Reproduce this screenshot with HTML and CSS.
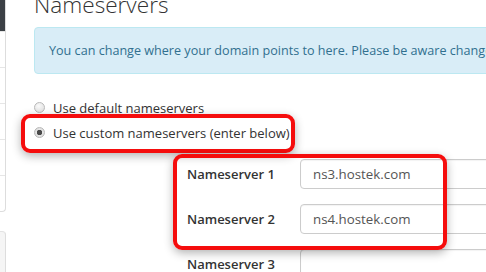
FILE: index.html
```html
<!DOCTYPE html>
<html lang="en">
<head>
    <meta charset="UTF-8">
    <title>Nameservers</title>
    <link rel="stylesheet" href="styles.css">
</head>
<body>
    <div class="page">
        <aside class="sidebar">
            <div class="panel">
                <div class="panel-heading"></div>
                <div class="panel-item"></div>
                <div class="panel-item"></div>
                <div class="panel-item"></div>
                <div class="panel-item"></div>
                <div class="panel-item"></div>
            </div>
            <div class="panel panel-alt"></div>
        </aside>

        <main class="content">
            <h1 class="title">Nameservers</h1>

            <div class="alert">
                You can change where your domain points to here. Please be aware changes can take up to 24 hours to propagate.
            </div>

            <div class="radios">
                <label class="radio">
                    <input type="radio" name="nschoice">
                    <span>Use default nameservers</span>
                </label>
                <label class="radio highlight-radio">
                    <input type="radio" name="nschoice" checked>
                    <span>Use custom nameservers (enter below)</span>
                </label>
            </div>

            <div class="ns-form">
                <div class="ns-group">
                    <div class="ns-row">
                        <label class="ns-label">Nameserver 1</label>
                        <input class="ns-input" type="text" value="ns3.hostek.com">
                    </div>
                    <div class="ns-row">
                        <label class="ns-label">Nameserver 2</label>
                        <input class="ns-input" type="text" value="ns4.hostek.com">
                    </div>
                </div>
                <div class="ns-row">
                    <label class="ns-label">Nameserver 3</label>
                    <input class="ns-input" type="text" value="">
                </div>
            </div>
        </main>
    </div>
</body>
</html>
```

FILE: styles.css
```css
/* styles.css */

body {
    margin: 0;
    background-color: #fff;
    font-family: 'Open Sans', 'Liberation Sans', sans-serif;
    color: #333;
    overflow: hidden;
}

.page {
    display: flex;
    align-items: flex-start;
    width: 640px;
}

/* sidebar, mostly scrolled off to the left */

.sidebar {
    width: 6px;
    flex-shrink: 0;
}

.panel {
    border: 1px solid #ddd;
    border-left: none;
    border-top: none;
    border-radius: 0 0 4px 0;
    background-color: #fff;
}

.panel-heading {
    height: 31px;
    background-color: #3b4045;
}

.panel-item {
    height: 35px;
    border-top: 1px solid #e6e6e6;
}

.panel-item:first-of-type {
    border-top: none;
}

.panel-alt {
    margin-top: 19px;
    height: 60px;
    background-color: #f5f5f5;
    border-top: 1px solid #e3e3e3;
    border-radius: 0 4px 0 0;
}

/* main column */

.content {
    flex: 1;
    padding-left: 28px;
}

.title {
    margin: -8px 0 10px 0;
    font-size: 22.6px;
    font-weight: 300;
    line-height: 25px;
    color: #333;
}

.alert {
    padding: 14px 14px;
    background-color: #d9edf7;
    border: 1px solid #bce8f1;
    border-radius: 4px;
    color: #31708f;
    font-size: 12.6px;
    line-height: 17px;
    white-space: nowrap;
    overflow: hidden;
}

.radios {
    margin-top: 21px;
}

.radio {
    display: flex;
    align-items: center;
    gap: 8px;
    height: 25px;
    font-size: 13px;
    color: #333;
}

.radio input {
    appearance: none;
    margin: 0;
    width: 11px;
    height: 11px;
    border: 1px solid #b9b9b9;
    border-radius: 50%;
    background: radial-gradient(circle at 40% 35%, #fafafa, #dcdcdc);
    flex-shrink: 0;
}

.radio input:checked {
    background: radial-gradient(circle, #4a4a4a 0 2.5px, #e6e6e6 3px, #d4d4d4);
}

.highlight-radio {
    position: relative;
}

/* red annotation frames */

.highlight-radio::after,
.ns-group::after {
    content: "";
    position: absolute;
    border: 4px solid #f50d0d;
    border-radius: 9px;
    box-shadow: 0 3px 10px rgba(0, 0, 0, 0.3);
    box-sizing: border-box;
    pointer-events: none;
}

.highlight-radio::after {
    left: -13px;
    top: -6px;
    width: 274px;
    height: 39px;
}

/* nameserver form */

.ns-form {
    margin-top: 14px;
    margin-left: 153px;
}

.ns-group {
    position: relative;
}

.ns-group::after {
    left: -14px;
    top: -5px;
    width: 274px;
    height: 96px;
}

.ns-row {
    display: grid;
    grid-template-columns: 113px 300px;
    align-items: center;
    margin-bottom: 15px;
}

.ns-label {
    font-size: 13px;
    font-weight: 600;
    color: #333;
}

.ns-input {
    height: 30px;
    box-sizing: border-box;
    padding: 0 12px;
    border: 1px solid #ccc;
    border-radius: 4px;
    font-family: 'Open Sans', 'Liberation Sans', sans-serif;
    font-size: 13.3px;
    color: #555;
    box-shadow: inset 0 1px 1px rgba(0, 0, 0, 0.05);
}
```
